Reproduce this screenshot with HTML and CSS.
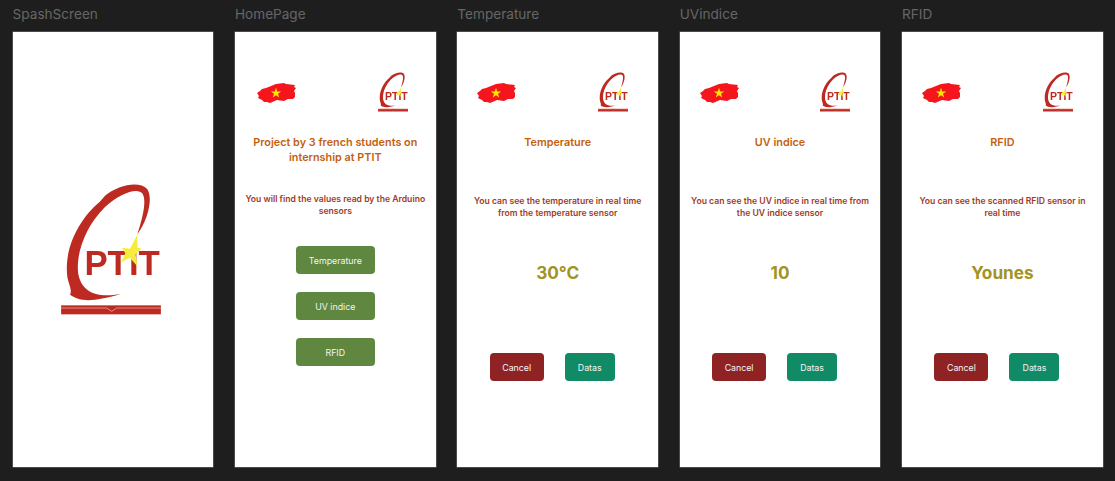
FILE: index.html
```html
<!DOCTYPE html>
<html lang="en">
<head>
<meta charset="utf-8">
<title>PTIT Prototype</title>
<link rel="stylesheet" href="styles.css">
</head>
<body>
<svg class="defs" width="0" height="0" aria-hidden="true">
  <symbol id="flag" viewBox="0 0 39 22">
    <path class="flag-red" d="M0 11L3 9L5 7L9 6L14 4L19 2L27 1L29 2L38 3L37 5L39 6L37 9L38 11L38 15L36 17L31 17L27 19L20 18L13 21L10 20L7 20L5 18L3 17L1 16L2 14Z"/>
    <path class="flag-star" d="M19 5.8L20.2 9.4L24.2 9.4L21 11.7L22.2 15.4L19 13.2L15.8 15.4L17 11.7L13.8 9.4L17.8 9.4Z"/>
  </symbol>
  <defs>
    <g id="ring">
      <path class="logo-red" d="M262 195C295 150 310 85 292 58C268 32 205 45 165 78L150 96C85 150 40 240 52 325C58 350 66 362 60 376C90 398 130 398 212 374C130 388 92 362 84 310C78 240 112 165 165 112C210 72 262 52 278 72C290 92 280 140 262 195Z"/>
      <path class="logo-red" d="M135 120L160 97L163 101L139 124ZM130 130L138 122L140 125L133 133Z"/>
    </g>
    <g id="base">
      <rect class="logo-red" x="33" y="408" width="300" height="27"/>
      <path class="logo-line" d="M33 416H170L185 426L200 416H333"/>
      <path class="logo-star" d="M262 196L263 235L275 237L257 254L262 290L240 265L213 278L226 251L216 235L240 238Z"/>
    </g>
  </defs>
</svg>

<main class="board">
  <section class="column">
    <h2 class="frame-label">SpashScreen</h2>
    <div class="frame frame-splash">
      <svg class="logo-large" viewBox="33 40 300 400"><use href="#ring"/><text class="logo-text" x="103" y="317" textLength="227" lengthAdjust="spacingAndGlyphs">PTIT</text><use href="#base"/></svg>
    </div>
  </section>

  <section class="column">
    <h2 class="frame-label">HomePage</h2>
    <div class="frame">
      <div class="brand-row brand-row-home"><svg class="flag"><use href="#flag"/></svg><svg class="logo-small" viewBox="33 40 300 400"><use href="#ring"/><text class="logo-text" x="103" y="317" textLength="227" lengthAdjust="spacingAndGlyphs">PTIT</text><use href="#base"/></svg></div>
      <h3 class="title">Project by 3 french students on internship at PTIT</h3>
      <p class="description description-home">You will find the values read by the Arduino sensors</p>
      <div class="menu">
        <button class="button button-menu">Temperature</button>
        <button class="button button-menu">UV indice</button>
        <button class="button button-menu">RFID</button>
      </div>
    </div>
  </section>

  <section class="column">
    <h2 class="frame-label">Temperature</h2>
    <div class="frame">
      <div class="brand-row"><svg class="flag"><use href="#flag"/></svg><svg class="logo-small" viewBox="33 40 300 400"><use href="#ring"/><text class="logo-text" x="103" y="317" textLength="227" lengthAdjust="spacingAndGlyphs">PTIT</text><use href="#base"/></svg></div>
      <h3 class="title title-single">Temperature</h3>
      <p class="description">You can see the temperature in real time from the temperature sensor</p>
      <div class="value">30°C</div>
      <div class="actions"><button class="button button-cancel">Cancel</button><button class="button button-datas">Datas</button></div>
    </div>
  </section>

  <section class="column">
    <h2 class="frame-label">UVindice</h2>
    <div class="frame">
      <div class="brand-row"><svg class="flag"><use href="#flag"/></svg><svg class="logo-small" viewBox="33 40 300 400"><use href="#ring"/><text class="logo-text" x="103" y="317" textLength="227" lengthAdjust="spacingAndGlyphs">PTIT</text><use href="#base"/></svg></div>
      <h3 class="title title-single">UV indice</h3>
      <p class="description">You can see the UV indice in real time from the UV indice sensor</p>
      <div class="value">10</div>
      <div class="actions"><button class="button button-cancel">Cancel</button><button class="button button-datas">Datas</button></div>
    </div>
  </section>

  <section class="column">
    <h2 class="frame-label">RFID</h2>
    <div class="frame">
      <div class="brand-row"><svg class="flag"><use href="#flag"/></svg><svg class="logo-small" viewBox="33 40 300 400"><use href="#ring"/><text class="logo-text" x="103" y="317" textLength="227" lengthAdjust="spacingAndGlyphs">PTIT</text><use href="#base"/></svg></div>
      <h3 class="title title-single">RFID</h3>
      <p class="description">You can see the scanned RFID sensor in real time</p>
      <div class="value">Younes</div>
      <div class="actions"><button class="button button-cancel">Cancel</button><button class="button button-datas">Datas</button></div>
    </div>
  </section>
</main>
</body>
</html>
```
FILE: styles.css
```css
* { box-sizing: border-box; }

html, body {
  margin: 0;
  height: 100%;
  overflow: hidden;
  background: #1e1e1e;
}

body {
  font-family: Inter, "Liberation Sans", sans-serif;
}

.defs { position: absolute; }

.board {
  display: flex;
  gap: 21.7px;
  padding: 0 0 0 12.6px;
}

.column {
  display: flex;
  flex-direction: column;
  width: 200.7px;
  flex: none;
}

.frame-label {
  margin: 0;
  height: 32px;
  padding-top: 6px;
  font-size: 13.6px;
  line-height: 16px;
  font-weight: 400;
  color: #666;
  white-space: nowrap;
}

.frame {
  display: flex;
  flex-direction: column;
  align-items: center;
  height: 435px;
  background: #fff;
  box-shadow: 0 0 0 .5px #777;
}

.frame-splash { justify-content: center; }

.logo-large { display: block; width: 100px; height: 133px; margin-right: 4px; filter: blur(.5px); }

.brand-row {
  display: flex;
  align-self: stretch;
  justify-content: space-between;
  align-items: center;
  height: 40px;
  margin-top: 40px;
  padding: 0 30px 0 20px;
}

.brand-row-home { padding: 0 28px 0 22px; }

.flag { display: block; width: 39px; height: 22px; margin-top: 2px; filter: blur(.6px); }
.logo-small { display: block; width: 30px; height: 40px; filter: blur(.25px); }

.logo-red { fill: #bd2a22; }
.logo-line { fill: none; stroke: #e9a49a; stroke-width: 2.5; }
.logo-star { fill: #f7ec3c; }
.logo-text {
  font-family: "Liberation Sans", sans-serif;
  font-size: 108px;
  font-weight: 700;
  fill: #bd2a22;
}
.flag-red { fill: #f4161c; }
.flag-star { fill: #ffe500; }

.title {
  margin: 23px 0 0;
  width: 180px;
  height: 30px;
  font-size: 10.85px;
  line-height: 14.5px;
  font-weight: 600;
  color: #c55f10;
  text-align: center;
}

.title-single { height: 29px; }

.description {
  margin: 31px 0 0;
  width: 180px;
  min-height: 24px;
  font-size: 8.64px;
  line-height: 12px;
  font-weight: 600;
  color: #a23a1e;
  text-align: center;
}

.description-home { margin-top: 28px; }

.menu {
  display: flex;
  flex-direction: column;
  gap: 18px;
  margin-top: 29px;
}

.button {
  display: block;
  height: 28px;
  padding: 0;
  border: 0;
  border-radius: 4px;
  font-family: Inter, "Liberation Sans", sans-serif;
  font-size: 8.8px;
  color: #f4f4f4;
  text-align: center;
}

.button-menu { width: 79px; background: #5f873f; }
.button-cancel { width: 54px; background: #8f2323; }
.button-datas { width: 50px; background: #118a66; }

.value {
  margin-top: 34px;
  height: 40px;
  font-size: 17.2px;
  line-height: 40px;
  font-weight: 700;
  color: #a3931f;
}

.actions {
  display: flex;
  gap: 21px;
  margin-top: 60px;
  margin-right: 11px;
}
```
